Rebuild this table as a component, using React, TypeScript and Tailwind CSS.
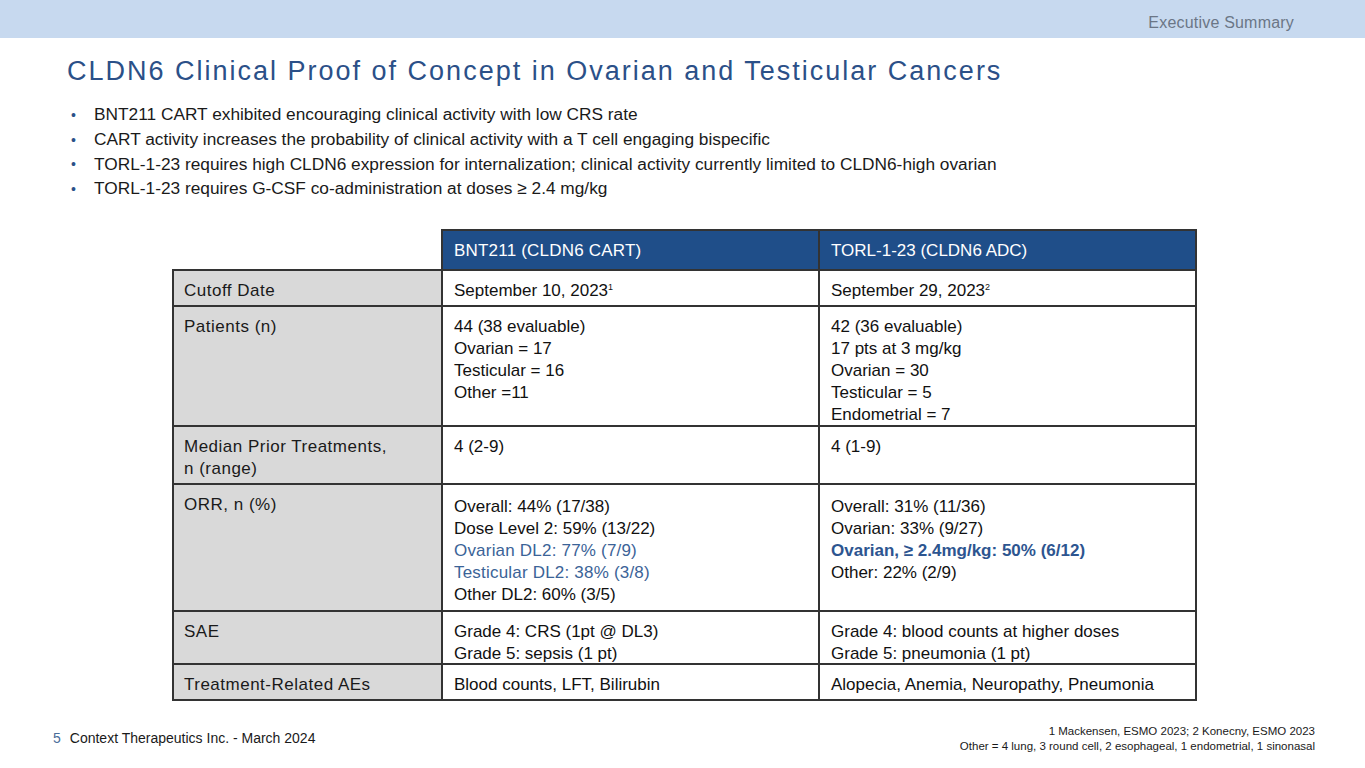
import React from "react";

const rows = [
  {
    label: ["Cutoff Date"],
    h: "h-[34px]",
    a: [<>September 10, 2023<sup className="text-[9px] -top-[0.6em]">1</sup></>],
    b: [<>September 29, 2023<sup className="text-[9px] -top-[0.6em]">2</sup></>],
  },
  {
    label: ["Patients (n)"],
    h: "h-[118px]",
    a: ["44 (38 evaluable)", "Ovarian = 17", "Testicular = 16", "Other =11"],
    b: ["42 (36 evaluable)", "17 pts at 3 mg/kg", "Ovarian = 30", "Testicular = 5", "Endometrial = 7"],
  },
  {
    label: ["Median Prior Treatments,", "n (range)"],
    h: "h-[56px]",
    a: ["4 (2-9)"],
    b: ["4 (1-9)"],
  },
  {
    label: ["ORR, n (%)"],
    h: "h-[125px]",
    a: [
      "Overall: 44% (17/38)",
      "Dose Level 2: 59% (13/22)",
      <span className="text-[#3b6397] tracking-[0.2px]">Ovarian DL2: 77% (7/9)</span>,
      <span className="text-[#3b6397] tracking-[0.2px]">Testicular DL2: 38% (3/8)</span>,
      "Other DL2: 60% (3/5)",
    ],
    b: [
      "Overall: 31% (11/36)",
      "Ovarian: 33% (9/27)",
      <span className="font-bold text-[#2d5590]">Ovarian, ≥ 2.4mg/kg: 50% (6/12)</span>,
      "Other: 22% (2/9)",
    ],
    top: "pt-[11px]",
  },
  {
    label: ["SAE"],
    h: "h-[51px]",
    a: ["Grade 4: CRS (1pt @ DL3)", "Grade 5: sepsis (1 pt)"],
    b: ["Grade 4: blood counts at higher doses", "Grade 5: pneumonia (1 pt)"],
  },
  {
    label: ["Treatment-Related AEs"],
    h: "h-[34px]",
    a: ["Blood counts, LFT, Bilirubin"],
    b: ["Alopecia, Anemia, Neuropathy, Pneumonia"],
  },
];

const bullets = [
  "BNT211 CART exhibited encouraging clinical activity with low CRS rate",
  "CART activity increases the probability of clinical activity with a T cell engaging bispecific",
  "TORL-1-23 requires high CLDN6 expression for internalization; clinical activity currently limited to CLDN6-high ovarian",
  "TORL-1-23 requires G-CSF co-administration at doses ≥ 2.4 mg/kg",
];

export default function App() {
  return (
    <div className="w-[1365px] h-[768px] bg-white flex flex-col overflow-hidden font-['Liberation_Sans',Arial,sans-serif]">
      {/* top band */}
      <div className="h-[38px] shrink-0 bg-[#c7d9ef] flex items-center justify-end pr-[71px] pt-[7px]">
        <span className="text-[16px] tracking-[0.2px] text-[#6b7686]">Executive Summary</span>
      </div>

      <h1 className="ml-[67px] mt-[17px] text-[27px] leading-[32px] tracking-[2px] text-[#2b5088]">
        CLDN6 Clinical Proof of Concept in Ovarian and Testicular Cancers
      </h1>

      <ul className="ml-[71px] mt-[16px] flex flex-col">
        {bullets.map((t, i) => (
          <li key={i} className="flex items-center h-[24.7px] text-[17.3px] text-[#1a1a1a]">
            <span className="w-[23px] text-[#2b5088] text-[14px]">•</span>
            {t}
          </li>
        ))}
      </ul>

      {/* comparison table */}
      <table className="ml-[172px] mt-[27px] border-collapse table-fixed w-[1023px] text-[17px] leading-[22px]">
        <colgroup>
          <col className="w-[269px]" />
          <col className="w-[377px]" />
          <col className="w-[377px]" />
        </colgroup>
        <thead>
          <tr className="h-[40px]">
            <th className="p-0" />
            <th className="bg-[#1f4e89] border-2 border-[#333] text-white font-normal text-left pl-[11px] pt-[2px] tracking-[0.2px]">
              BNT211 (CLDN6 CART)
            </th>
            <th className="bg-[#1f4e89] border-2 border-[#333] text-white font-normal text-left pl-[11px] pt-[2px]">
              TORL-1-23 (CLDN6 ADC)
            </th>
          </tr>
        </thead>
        <tbody>
          {rows.map((r, i) => (
            <tr key={i}>
              <td className="bg-[#d9d9d9] border-2 border-[#333] p-0 align-top">
                <div className={`${r.h} overflow-hidden pl-[10px] pt-[9px] tracking-[0.5px] text-[#1a1a1a]`}>
                  {r.label.map((l, j) => (
                    <div key={j}>{l}</div>
                  ))}
                </div>
              </td>
              <td className="border-2 border-[#333] p-0 align-top">
                <div className={`${r.h} overflow-hidden pl-[11px] ${r.top ?? "pt-[9px]"} text-[#111]`}>
                  {r.a.map((l, j) => (
                    <div key={j}>{l}</div>
                  ))}
                </div>
              </td>
              <td className="border-2 border-[#333] p-0 align-top">
                <div className={`${r.h} overflow-hidden pl-[11px] ${r.top ?? "pt-[9px]"} text-[#111]`}>
                  {r.b.map((l, j) => (
                    <div key={j}>{l}</div>
                  ))}
                </div>
              </td>
            </tr>
          ))}
        </tbody>
      </table>

      {/* footer */}
      <div className="mt-auto mb-[14px] flex items-end justify-between pl-[53px] pr-[50px]">
        <div className="flex items-center gap-[9px] text-[14px] leading-[17px] mb-[7px]">
          <span className="text-[#4a6d99]">5</span>
          <span className="text-[#1a1a1a]">Context Therapeutics Inc. - March 2024</span>
        </div>
        <div className="text-right text-[11.5px] leading-[15px] text-[#1a1a1a]">
          <div>1 Mackensen, ESMO 2023; 2 Konecny, ESMO 2023</div>
          <div>Other = 4 lung, 3 round cell, 2 esophageal, 1 endometrial, 1 sinonasal</div>
        </div>
      </div>
    </div>
  );
}
